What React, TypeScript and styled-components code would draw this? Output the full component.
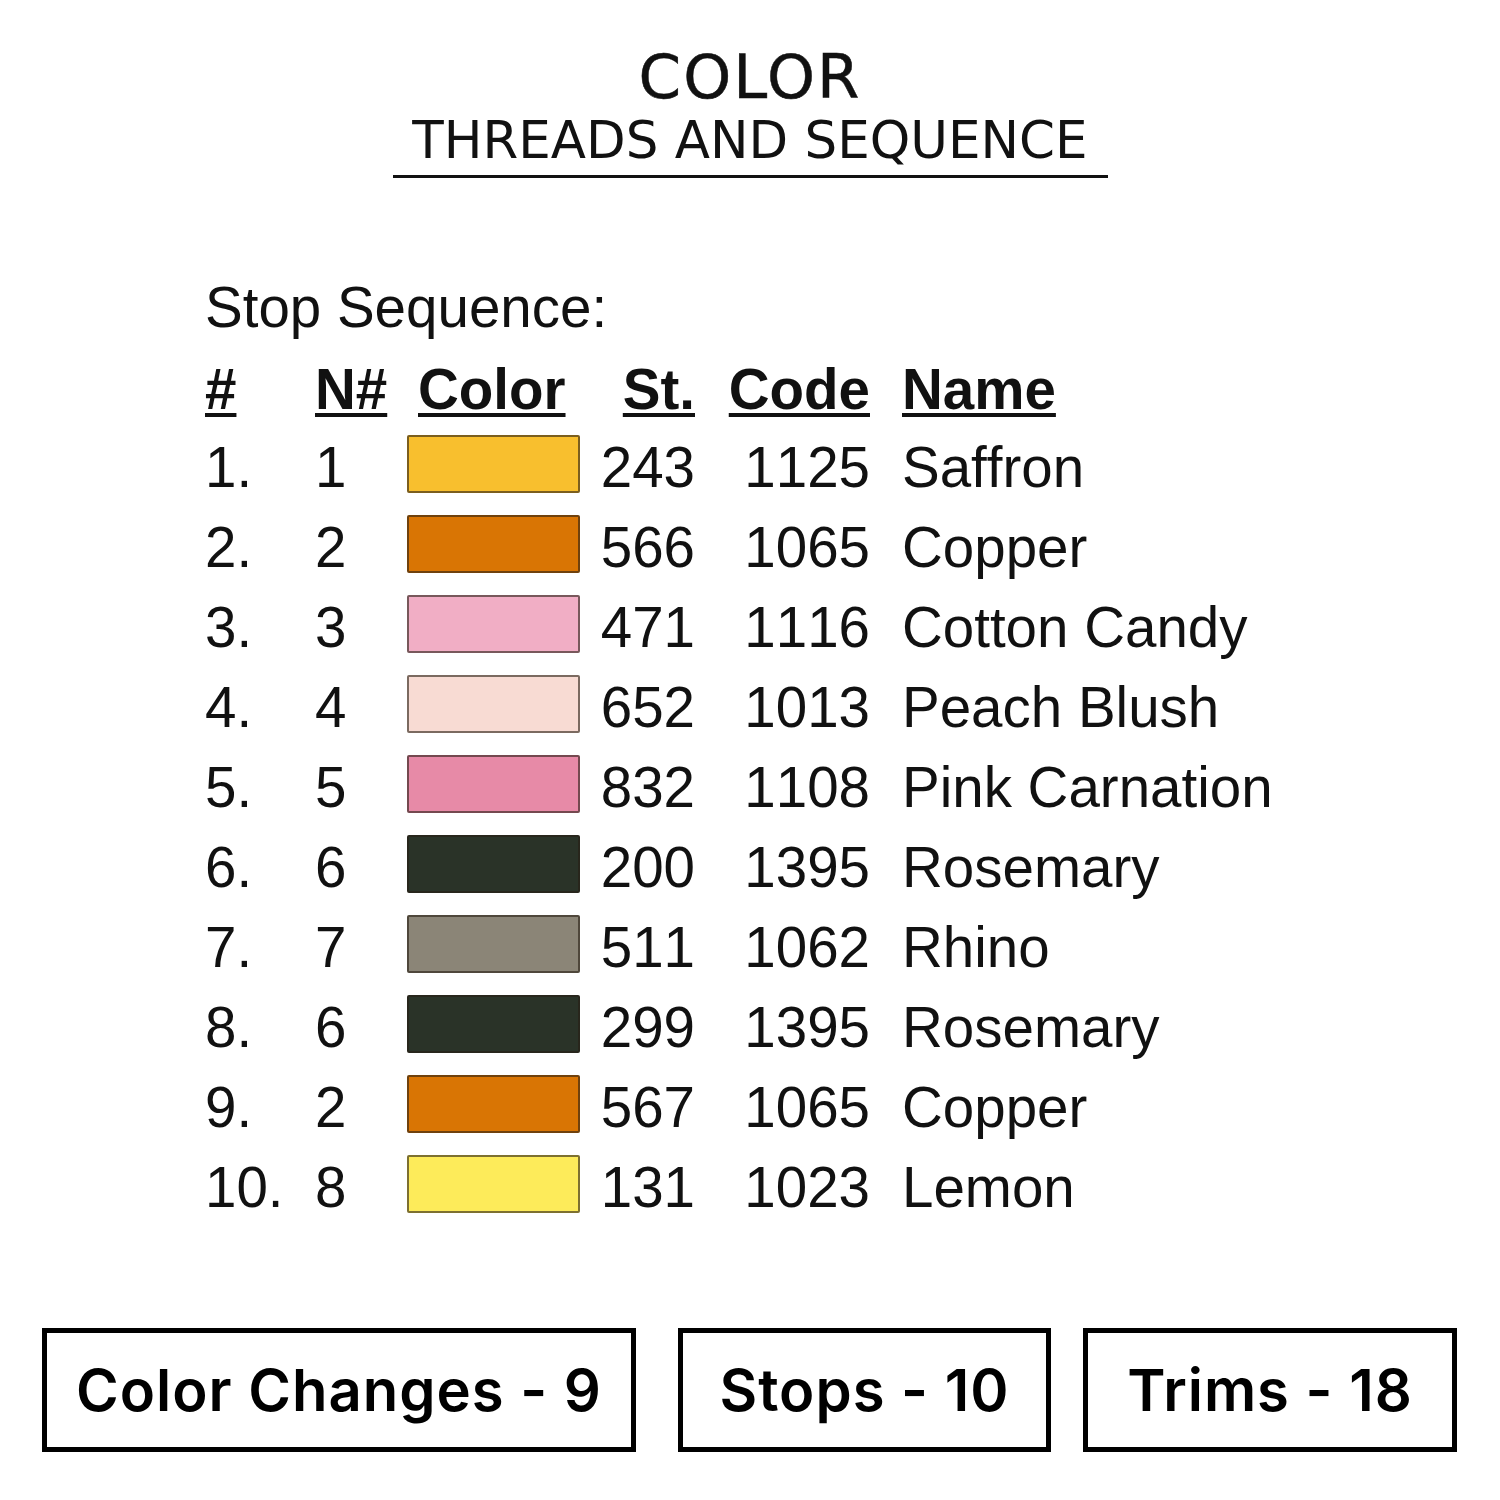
import { createGlobalStyle, styled } from 'styled-components';

type Thread = {
  readonly n: number;
  readonly color: string;
  readonly stitches: number;
  readonly code: number;
  readonly name: string;
};

const THREADS: Thread[] = [
  { n: 1, color: '#f8bf2e', stitches: 243, code: 1125, name: 'Saffron' },
  { n: 2, color: '#d97504', stitches: 566, code: 1065, name: 'Copper' },
  { n: 3, color: '#f1aec5', stitches: 471, code: 1116, name: 'Cotton Candy' },
  { n: 4, color: '#f8dbd3', stitches: 652, code: 1013, name: 'Peach Blush' },
  { n: 5, color: '#e78aa7', stitches: 832, code: 1108, name: 'Pink Carnation' },
  { n: 6, color: '#2a3328', stitches: 200, code: 1395, name: 'Rosemary' },
  { n: 7, color: '#8b8577', stitches: 511, code: 1062, name: 'Rhino' },
  { n: 6, color: '#2a3328', stitches: 299, code: 1395, name: 'Rosemary' },
  { n: 2, color: '#d97504', stitches: 567, code: 1065, name: 'Copper' },
  { n: 8, color: '#fdeb5a', stitches: 131, code: 1023, name: 'Lemon' },
];

const STATS = [
  { label: 'Color Changes - 9', width: 594, before: 0 },
  { label: 'Stops - 10', width: 373, before: 42 },
  { label: 'Trims - 18', width: 374, before: 32 },
];

export default function App(): JSX.Element {
  return (
    <>
      <GlobalStyle />
      <StyledPage>
        <StyledHeader>
          <StyledTitle>COLOR</StyledTitle>
          <StyledSubtitle>THREADS AND SEQUENCE</StyledSubtitle>
        </StyledHeader>

        <StyledSequence>
          <StyledCaption>Stop Sequence:</StyledCaption>
          <StyledTable>
            <StyledHead>#</StyledHead>
            <StyledHead>N#</StyledHead>
            <StyledHead $indent={11}>Color</StyledHead>
            <StyledHead $right>St.</StyledHead>
            <StyledHead $right>Code</StyledHead>
            <StyledHead $indent={32}>Name</StyledHead>
            {THREADS.map((t, i) => (
              <StyledRow key={i}>
                <StyledCell>{i + 1}.</StyledCell>
                <StyledCell>{t.n}</StyledCell>
                <StyledSwatch $color={t.color} />
                <StyledCell $right>{t.stitches}</StyledCell>
                <StyledCell $right>{t.code}</StyledCell>
                <StyledCell $indent={32}>{t.name}</StyledCell>
              </StyledRow>
            ))}
          </StyledTable>
        </StyledSequence>

        <StyledStats>
          {STATS.map((s) => (
            <StyledStat key={s.label} $width={s.width} $before={s.before}>
              {s.label}
            </StyledStat>
          ))}
        </StyledStats>
      </StyledPage>
    </>
  );
}

const GlobalStyle = createGlobalStyle`
  html, body {
    margin: 0;
    padding: 0;
    background: #fff;
  }
  body {
    color: #000;
    font-family: 'Liberation Sans', Arial, sans-serif;
  }
`;

const StyledPage = styled.div`
  width: 1500px;
  height: 1500px;
  display: flex;
  flex-direction: column;
  background: #fff;
  overflow: hidden;
`;

const StyledHeader = styled.header`
  display: flex;
  flex-direction: column;
  align-items: center;
  padding-top: 47px;
  font-family: 'DejaVu Sans', sans-serif;
  color: #111;
`;

const StyledTitle = styled.h1`
  margin: 0;
  font-size: 61px;
  font-weight: 400;
  line-height: 60px;
  letter-spacing: 2px;
  -webkit-text-stroke: 0.5px #111;
`;

const StyledSubtitle = styled.h2`
  margin: 3px 0 0;
  width: 715px;
  box-sizing: border-box;
  text-align: center;
  font-size: 51.5px;
  font-weight: 400;
  line-height: 60px;
  padding-bottom: 5px;
  border-bottom: 3px solid #111;
`;

const StyledSequence = styled.section`
  display: flex;
  flex-direction: column;
  padding: 95px 0 0 205px;
  color: #111;
`;

const StyledCaption = styled.div`
  font-size: 56.5px;
  line-height: 70px;
  margin-bottom: 9px;
`;

const StyledTable = styled.div`
  display: grid;
  grid-template-columns: 110px 92px 173px 115px 175px auto;
  font-size: 56.5px;
  font-kerning: none;
`;

const StyledRow = styled.div`
  display: contents;
`;

const StyledHead = styled.div<{ $right?: boolean; $indent?: number }>`
  font-weight: 700;
  line-height: 76px;
  text-align: ${(p) => (p.$right ? 'right' : 'left')};
  padding-left: ${(p) => p.$indent ?? 0}px;
  text-decoration: underline;
  text-decoration-thickness: 4px;
  text-underline-offset: 4px;
`;

const StyledCell = styled.div<{ $right?: boolean; $indent?: number }>`
  line-height: 80px;
  white-space: nowrap;
  text-align: ${(p) => (p.$right ? 'right' : 'left')};
  padding-left: ${(p) => p.$indent ?? 0}px;
`;

const StyledSwatch = styled.div<{ $color: string }>`
  align-self: start;
  margin-top: 7px;
  height: 58px;
  box-sizing: border-box;
  background: ${(p) => p.$color};
  border: 2px solid rgba(40, 30, 20, 0.6);
  border-radius: 2px;
`;

const StyledStats = styled.div`
  display: flex;
  padding: 100px 0 0 42px;
`;

const StyledStat = styled.div<{ $width: number; $before: number }>`
  width: ${(p) => p.$width}px;
  height: 124px;
  margin-left: ${(p) => p.$before}px;
  box-sizing: border-box;
  border: 5px solid #000;
  display: flex;
  align-items: center;
  justify-content: center;
  font-family: Inter, 'Open Sans', sans-serif;
  font-weight: 600;
  font-size: 58px;
  letter-spacing: 1px;
  color: #000;
`;
